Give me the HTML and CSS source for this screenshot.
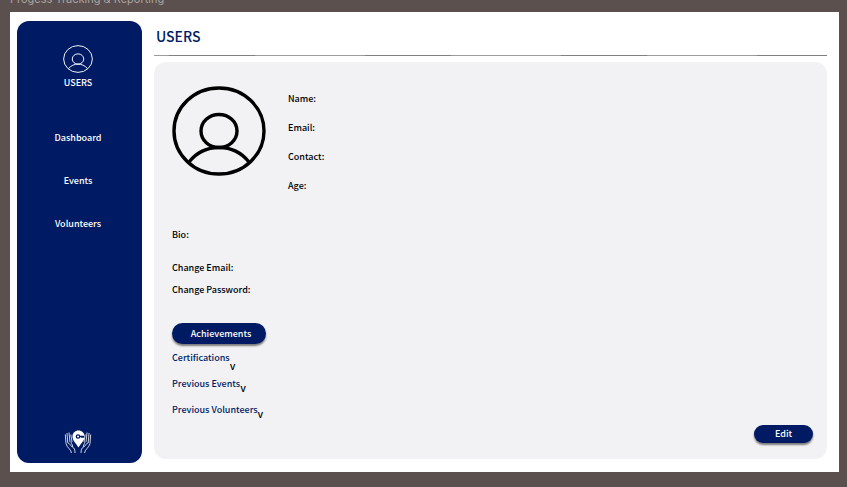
FILE: index.html
```html
<!DOCTYPE html>
<html lang="en">
<head>
<meta charset="utf-8">
<title>Users</title>
<meta name="viewport" content="width=device-width, initial-scale=1">
<link rel="stylesheet" href="styles.css">
</head>
<body>
<div class="caption">Progess Tracking &amp; Reporting</div>
<div class="frame">
  <nav class="sidebar" aria-label="Main">
    <a class="profile" href="#users">
      <svg class="profile-icon" viewBox="0 0 94 90" preserveAspectRatio="none" aria-hidden="true">
        <ellipse cx="47" cy="45" rx="45" ry="43"/>
        <ellipse cx="47" cy="45" rx="18" ry="16.500"/>
        <path d="M17 76C25 66 36 61.500 47 61.500S69 66 77 76"/>
      </svg>
      <span>USERS</span>
    </a>
    <ul class="links">
      <li><a href="#dashboard">Dashboard</a></li>
      <li><a href="#events">Events</a></li>
      <li><a href="#volunteers">Volunteers</a></li>
    </ul>
    <svg class="logo" viewBox="0 0 28 24" aria-hidden="true">
      <path class="pin" d="M14.500 0.500C11 0.500 8.500 3 8.500 6.500C8.500 11 12 13 14.500 17.500C17 13 20.500 11 20.500 6.500C20.500 3 18 0.500 14.500 0.500Z"/>
      <circle class="key" cx="14" cy="6.500" r="1.700"/>
      <path class="key" d="M15.700 6.500H20.500M18 6.500V8M20 6.500V8"/>
      <path class="hand" d="M7.500 23C7 19 3 18 2 13.500L1.300 4.500M3.800 13L3 3M6 12L5 2.500M8 12L6.800 4.500M4 13C6 13 7 17 8.500 17C9.300 16 7.500 14 7 12M8.500 17C10.500 18 11 20 11 23"/>
      <path class="hand" d="M20.500 23C21 19 25 18 26 13.500L26.700 4.500M24.200 13L25 3M22 12L23 2.500M20 12L21.200 4.500M24 13C22 13 21 17 19.500 17C18.700 16 20.500 14 21 12M19.500 17C17.500 18 17 20 17 23"/>
    </svg>
  </nav>
  <main class="content">
    <h1>USERS</h1>
    <section class="card">
      <div class="summary">
        <svg class="avatar" viewBox="0 0 94 90" role="img" aria-label="Profile picture">
          <ellipse cx="47" cy="45" rx="45" ry="43"/>
          <ellipse cx="47" cy="45" rx="18" ry="16.500"/>
          <path d="M17 76C25 66 36 61.500 47 61.500S69 66 77 76"/>
        </svg>
        <dl class="details">
          <dt>Name:</dt>
          <dt>Email:</dt>
          <dt>Contact:</dt>
          <dt>Age:</dt>
        </dl>
      </div>
      <p class="bio">Bio:</p>
      <div class="account">
        <p>Change Email:</p>
        <p>Change Password:</p>
      </div>
      <button class="pill achievements" type="button">Achievements</button>
      <div class="sections">
        <button class="toggle low" type="button">Certifications<span>v</span></button>
        <button class="toggle" type="button">Previous Events<span>v</span></button>
        <button class="toggle" type="button">Previous Volunteers<span>v</span></button>
      </div>
      <button class="pill edit" type="button">Edit</button>
    </section>
  </main>
</div>
</body>
</html>
```
FILE: styles.css
```css
* {
  box-sizing: border-box;
}

body {
  margin: 0;
  height: 100vh;
  padding: 0 8px 15px 10px;
  display: flex;
  flex-direction: column;
  overflow: hidden;
  background: #5b504e;
  color: #000;
  font: 500 9px/14px "Noto Sans CJK SC", "Noto Sans", sans-serif;
}

a {
  color: inherit;
  text-decoration: none;
}

button {
  border: 0;
  padding: 0;
  background: none;
  font: inherit;
  cursor: pointer;
}

p,
dl,
ul {
  margin: 0;
  padding: 0;
}

.caption {
  flex: none;
  height: 12px;
  padding-bottom: 6px;
  display: flex;
  align-items: flex-end;
  overflow: hidden;
  color: #aaa4a3;
  font: 400 11px/14px Inter, sans-serif;
}

.frame {
  flex: 1;
  min-height: 0;
  display: flex;
  gap: 12px;
  padding: 9px 12px 9px 7px;
  background: #fff;
}

.sidebar {
  flex: none;
  width: 125px;
  padding: 24px 3px 9px 0;
  display: flex;
  flex-direction: column;
  align-items: center;
  border-radius: 12px;
  background: #001b64;
  color: #fff;
}

.profile {
  display: flex;
  flex-direction: column;
  align-items: center;
  gap: 3px;
}

.profile-icon,
.avatar {
  fill: none;
  stroke: currentColor;
}

.profile-icon {
  width: 30px;
  height: 28px;
  stroke-width: 3px;
}

.links {
  margin-top: 41px;
  display: flex;
  flex-direction: column;
  gap: 29px;
  text-align: center;
  list-style: none;
}

.logo {
  width: 28px;
  height: 24px;
  margin-top: auto;
  fill: none;
}

.pin {
  fill: #fff;
}

.key {
  stroke: #001b64;
  stroke-width: 1.3px;
}

.hand {
  stroke: #fff;
  stroke-width: 0.8px;
}

.content {
  flex: 1;
  display: flex;
  flex-direction: column;
}

h1 {
  margin: 0 0 6px;
  padding: 5px 2px 9px;
  background: repeating-linear-gradient(90deg, #808080 0 86px, #9c9c9c 86px 196px) 15px bottom / 100% 1px no-repeat,
    linear-gradient(#9c9c9c, #9c9c9c) left bottom / 15px 1px no-repeat;
  color: #001b64;
  font-size: 14px;
  font-weight: 500;
  line-height: 21px;
}

.card {
  flex: 1;
  margin-bottom: 4px;
  padding: 24px 14px 16px 18px;
  display: flex;
  flex-direction: column;
  align-items: flex-start;
  border-radius: 12px;
  background: #f2f2f4;
}

.summary {
  display: flex;
  gap: 22px;
}

.avatar {
  width: 94px;
  height: 90px;
  stroke-width: 3.4px;
}

.details {
  padding-top: 6px;
  display: grid;
  gap: 15px;
}

.bio {
  margin-top: 35px;
}

.account {
  margin-top: 19px;
  display: grid;
  gap: 8px;
}

.pill {
  border-radius: 11px;
  background: #001b64;
  box-shadow: 0 2px 2px rgba(0, 0, 0, 0.5);
  color: #fff;
}

.achievements {
  width: 94px;
  height: 21px;
  margin-top: 26px;
  padding-left: 4px;
}

.sections {
  margin-top: 7px;
  display: grid;
  justify-items: start;
  gap: 12px;
}

.toggle {
  display: flex;
  color: #001b64;
}

.toggle span {
  height: 14px;
  padding-top: 4px;
  color: #000;
  font: 500 10px/14px Inter, sans-serif;
}

.low span {
  padding-top: 8px;
}

.edit {
  width: 59px;
  height: 18px;
  margin-top: auto;
  align-self: flex-end;
}
```
